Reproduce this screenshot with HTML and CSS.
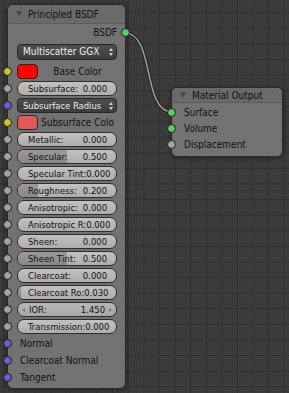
FILE: index.html
```html
<!DOCTYPE html>
<html lang="en">
<head>
    <meta charset="UTF-8">
    <meta name="viewport" content="width=device-width, initial-scale=1.0">
    <title>Node Editor</title>
    <link rel="stylesheet" href="styles.css">
</head>
<body>
    <div class="editor">
        <svg class="wires" width="289" height="393">
            <path d="M125 33 C155 33 142 112 172 112" class="wire-edge"/>
            <path d="M125 33 C155 33 142 112 172 112" class="wire"/>
        </svg>

        <div class="node bsdf">
            <div class="node-head"><span class="arrow"></span>Principled BSDF</div>
            <div class="node-body">
                <div class="row out">BSDF<span class="socket right green"></span></div>
                <div class="row menu-row"><div class="menu">Multiscatter GGX<span class="updown"></span></div></div>
                <div class="row color-row">
                    <span class="socket yellow"></span>
                    <div class="swatch base"></div>
                    <span class="label">Base Color</span>
                </div>
                <div class="row"><span class="socket gray"></span>
                    <div class="slider"><div class="fill" style="width:0%"></div><span>Subsurface:</span><span>0.000</span></div></div>
                <div class="row"><span class="socket blue"></span>
                    <div class="menu small">Subsurface Radius<span class="updown"></span></div></div>
                <div class="row"><span class="socket yellow"></span>
                    <div class="swatch sub"></div>
                    <span class="label">Subsurface Colo</span></div>
                <div class="row"><span class="socket gray"></span>
                    <div class="slider"><div class="fill" style="width:0%"></div><span>Metallic:</span><span>0.000</span></div></div>
                <div class="row"><span class="socket gray"></span>
                    <div class="slider"><div class="fill" style="width:50%"></div><span>Specular:</span><span>0.500</span></div></div>
                <div class="row"><span class="socket gray"></span>
                    <div class="slider"><div class="fill" style="width:0%"></div><span>Specular Tint:</span><span>0.000</span></div></div>
                <div class="row"><span class="socket gray"></span>
                    <div class="slider"><div class="fill" style="width:20%"></div><span>Roughness:</span><span>0.200</span></div></div>
                <div class="row"><span class="socket gray"></span>
                    <div class="slider"><div class="fill" style="width:0%"></div><span>Anisotropic:</span><span>0.000</span></div></div>
                <div class="row"><span class="socket gray"></span>
                    <div class="slider"><div class="fill" style="width:0%"></div><span>Anisotropic R:</span><span>0.000</span></div></div>
                <div class="row"><span class="socket gray"></span>
                    <div class="slider"><div class="fill" style="width:0%"></div><span>Sheen:</span><span>0.000</span></div></div>
                <div class="row"><span class="socket gray"></span>
                    <div class="slider"><div class="fill" style="width:50%"></div><span>Sheen Tint:</span><span>0.500</span></div></div>
                <div class="row"><span class="socket gray"></span>
                    <div class="slider"><div class="fill" style="width:0%"></div><span>Clearcoat:</span><span>0.000</span></div></div>
                <div class="row"><span class="socket gray"></span>
                    <div class="slider"><div class="fill" style="width:3%"></div><span>Clearcoat Ro:</span><span>0.030</span></div></div>
                <div class="row"><span class="socket gray"></span>
                    <div class="slider number"><span class="tri l"></span><span>IOR:</span><span>1.450</span><span class="tri r"></span></div></div>
                <div class="row"><span class="socket gray"></span>
                    <div class="slider"><div class="fill" style="width:0%"></div><span>Transmission:</span><span>0.000</span></div></div>
                <div class="row"><span class="socket blue"></span><span class="label in">Normal</span></div>
                <div class="row"><span class="socket blue"></span><span class="label in">Clearcoat Normal</span></div>
                <div class="row"><span class="socket blue"></span><span class="label in">Tangent</span></div>
            </div>
        </div>

        <div class="node output">
            <div class="node-head"><span class="arrow"></span>Material Output</div>
            <div class="node-body">
                <div class="row"><span class="socket green"></span><span class="label in">Surface</span></div>
                <div class="row"><span class="socket green"></span><span class="label in">Volume</span></div>
                <div class="row"><span class="socket gray"></span><span class="label in">Displacement</span></div>
            </div>
        </div>
    </div>
</body>
</html>
```

FILE: styles.css
```css
body{
    margin: 0;
    background-color: #3b3b3b;
}
.editor{
    position: relative;
    width: 289px;
    height: 393px;
    overflow: hidden;
    font: 10px "DejaVu Sans Condensed", "DejaVu Sans", sans-serif;
    font-stretch: condensed;
    color: #111111;
    white-space: nowrap;
    background-color: #3b3b3b;
    background-image:
        linear-gradient(to right, #303030 1px, transparent 1px),
        linear-gradient(to bottom, #303030 1px, transparent 1px);
    background-size: 15.6px 15.6px;
    background-position: 3px 12px;
}
.wires{
    position: absolute;
    left: 0;
    top: 0;
}
.wire-edge{
    fill: none;
    stroke: #1e1e1e;
    stroke-width: 3.5;
}
.wire{
    fill: none;
    stroke: #9a9a9a;
    stroke-width: 1.6;
}
.node{
    position: absolute;
    background-color: #727272;
    border: 1px solid #2a2a2a;
    border-radius: 6px;
    box-shadow: 0 1px 5px rgba(0,0,0,0.45);
}
.bsdf{
    left: 7px;
    top: 4px;
    width: 117px;
}
.output{
    left: 171px;
    top: 87px;
    width: 110px;
}
.node-head{
    height: 19px;
    line-height: 19px;
    padding-left: 8px;
    background-color: #6a6a6a;
    border-radius: 5px 5px 0 0;
    border-bottom: 1px solid #5c5c5c;
    box-sizing: border-box;
    display: flex;
    align-items: center;
    gap: 6px;
}
.output .node-head{
    height: 15px;
    line-height: 15px;
}
.arrow{
    width: 0;
    height: 0;
    border-left: 3.5px solid transparent;
    border-right: 3.5px solid transparent;
    border-top: 6px solid #4a4a4a;
}
.node-body{
    padding-bottom: 2px;
}
.output .node-body{
    padding-top: 1px;
    padding-bottom: 4px;
}
.row{
    position: relative;
    height: 17px;
    display: flex;
    align-items: center;
    padding: 0 8px 0 9px;
}
.output .row{
    height: 16px;
}
.out{
    justify-content: flex-end;
}
.menu-row{
    margin-top: 2px;
}
.color-row{
    margin-top: 3px;
}
.socket{
    position: absolute;
    left: -5px;
    top: 4px;
    width: 7px;
    height: 7px;
    border: 1px solid #1c1c1c;
    border-radius: 50%;
}
.socket.right{
    left: auto;
    right: -5px;
}
.green{ background-color: #63c763; }
.yellow{ background-color: #c7c729; }
.blue{ background-color: #6363c7; }
.gray{ background-color: #a1a1a1; }

.menu{
    flex: 1;
    height: 16px;
    line-height: 14px;
    padding-left: 5px;
    color: #f0f0f0;
    background: linear-gradient(#4e4e4e, #3c3c3c);
    border: 1px solid #262626;
    border-radius: 4px;
    box-sizing: border-box;
    position: relative;
}
.menu.small{
    height: 15px;
    line-height: 13px;
    font-size: 9.4px;
}
.updown{
    position: absolute;
    right: 5px;
    top: 3px;
    width: 0;
    height: 8px;
}
.updown::before, .updown::after{
    content: "";
    position: absolute;
    left: -2px;
    border-left: 2px solid transparent;
    border-right: 2px solid transparent;
}
.updown::before{
    top: 0;
    border-bottom: 3px solid #d0d0d0;
}
.updown::after{
    bottom: 0;
    border-top: 3px solid #d0d0d0;
}
.swatch{
    width: 21px;
    height: 15px;
    border: 1px solid #2a2a2a;
    border-radius: 4px;
    box-sizing: border-box;
}
.base{ background-color: #ff0000; }
.sub{ background-color: #e05a5a; }
.label{
    flex: 1;
    text-align: center;
}
.label.in{
    text-align: left;
    padding-left: 3px;
}
.slider{
    flex: 1;
    position: relative;
    height: 15px;
    display: flex;
    justify-content: space-between;
    align-items: center;
    padding: 0 9px 0 10px;
    font-size: 9.4px;
    background: linear-gradient(#c2c2c2, #adadad);
    border: 1px solid #2e2e2e;
    border-radius: 7px;
    box-sizing: border-box;
    overflow: hidden;
}
.fill{
    position: absolute;
    left: 0;
    top: 0;
    bottom: 0;
    background: linear-gradient(#9a9a9a, #888888);
}
.slider span{
    position: relative;
}
.number{
    padding: 0 4px;
    background: linear-gradient(#b8b8b8, #a6a6a6);
}
.number span:nth-child(2){
    flex: 1;
    padding-left: 4px;
}
.number span:nth-child(3){
    padding-right: 4px;
}
.tri{
    width: 0;
    height: 0;
    border-top: 2.5px solid transparent;
    border-bottom: 2.5px solid transparent;
}
.tri.l{
    border-right: 3px solid #7c7c7c;
}
.tri.r{
    border-left: 3px solid #7c7c7c;
}
```
